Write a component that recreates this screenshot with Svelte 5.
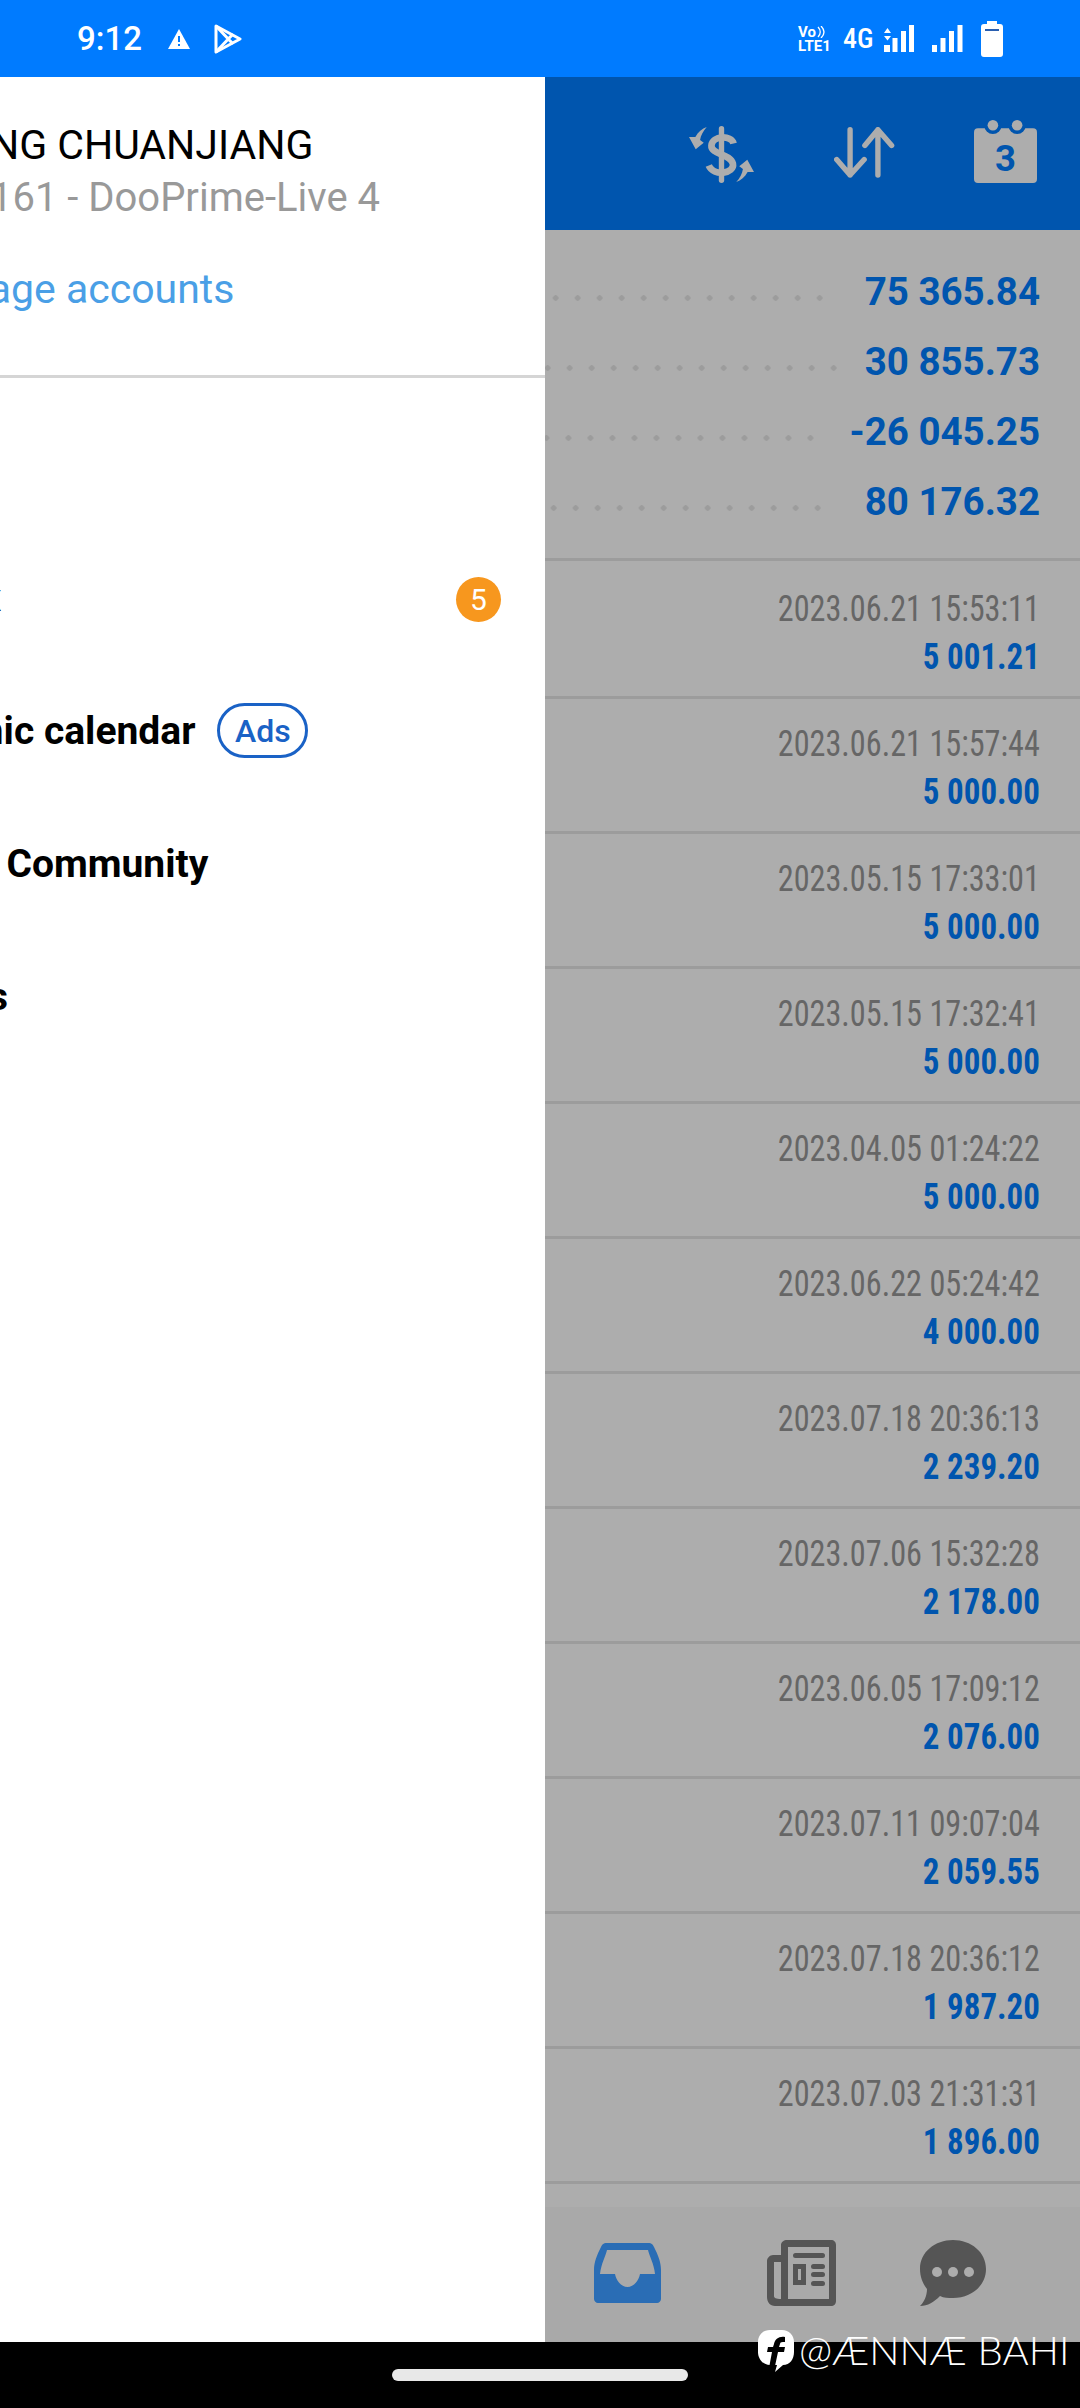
<script>
  const summary = [
    { value: "75 365.84", gap: 34 },
    { value: "30 855.73", gap: 20 },
    { value: "-26 045.25", gap: 28 },
    { value: "80 176.32", gap: 36 }
  ];
  const deals = [
    ["2023.06.21 15:53:11", "5 001.21"],
    ["2023.06.21 15:57:44", "5 000.00"],
    ["2023.05.15 17:33:01", "5 000.00"],
    ["2023.05.15 17:32:41", "5 000.00"],
    ["2023.04.05 01:24:22", "5 000.00"],
    ["2023.06.22 05:24:42", "4 000.00"],
    ["2023.07.18 20:36:13", "2 239.20"],
    ["2023.07.06 15:32:28", "2 178.00"],
    ["2023.06.05 17:09:12", "2 076.00"],
    ["2023.07.11 09:07:04", "2 059.55"],
    ["2023.07.18 20:36:12", "1 987.20"],
    ["2023.07.03 21:31:31", "1 896.00"]
  ];
</script>

<div class="screen">
  <header class="status">
    <div class="status-left">
      <span class="time">9:12</span>
      <svg class="warn" viewBox="0 0 22 20"><path d="M11 0 22 20H0Z" fill="#fff" /><path d="M10 7h2v6h-2zM10 15h2v2h-2z" fill="#007bff" /></svg>
      <svg class="play" viewBox="0 0 28 32" fill="none" stroke="#fff" stroke-width="3" stroke-linejoin="round"><path d="M2 3 26 16 2 29Z" /><path d="M2 3 19 21M2 29 19 11" /></svg>
    </div>
    <div class="status-right">
      <div class="volte"><span>Vo<svg viewBox="0 0 8 12" fill="none" stroke="#fff" stroke-width="1.3"><path d="M1 1c3 3 3 7 0 10M4 0c4 4 4 8 0 12" /></svg></span><span>LTE1</span></div>
      <span class="net">4G</span>
      <svg class="signal one" viewBox="0 0 32 28" fill="#fff">
        <path d="M1 8 4.500 3 8 8zM1 11h7l-3.500 4.500z" />
        <rect x="1" y="20" width="6" height="7" /><rect x="9.500" y="13" width="5" height="14" /><rect x="18" y="6" width="5" height="21" /><rect x="26" y="0" width="5" height="27" />
      </svg>
      <svg class="signal two" viewBox="0 0 31 28" fill="#fff">
        <rect x="0" y="20" width="5" height="7" /><rect x="8.500" y="13" width="5" height="14" /><rect x="17" y="6" width="5" height="21" /><rect x="25.500" y="0" width="5" height="27" />
      </svg>
      <svg class="battery" viewBox="0 0 22 36"><path d="M6 0h10v3h3a3 3 0 0 1 3 3v27a3 3 0 0 1-3 3H3a3 3 0 0 1-3-3V6a3 3 0 0 1 3-3h3z" fill="#fff" /><rect x="4" y="8" width="14" height="2" fill="#2a5fb0" /></svg>
    </div>
  </header>

  <div class="body">
    <aside class="drawer">
      <div class="account">
        <div class="name">ZHANG CHUANJIANG</div>
        <div class="server">1234161 - DooPrime-Live 4</div>
        <div class="manage">Manage accounts</div>
      </div>
      <nav class="menu">
        <div class="item"><span class="label">Mailbox</span><span class="badge">5</span></div>
        <div class="item"><span class="label">Economic calendar</span><span class="ads">Ads</span></div>
        <div class="item"><span class="label">Traders Community</span></div>
        <div class="item"><span class="label">Settings</span></div>
      </nav>
    </aside>

    <main class="panel">
      <div class="appbar">
        <svg class="ic-dollar" viewBox="0 0 200 170">
          <path d="M100 8V162" fill="none" stroke="#adadad" stroke-width="16" stroke-linecap="round" />
          <path d="M136 52C130 26 72 28 70 58 68 86 126 82 134 112 140 142 76 152 62 118" fill="none" stroke="#adadad" stroke-width="20" />
          <path d="M56 3C42 8 30 18 22 33L3 33 23 69 47 50 36 42C38 28 46 14 56 3Z" fill="#adadad" />
          <path d="M56 3C42 8 30 18 22 33L3 33 23 69 47 50 36 42C38 28 46 14 56 3Z" fill="#adadad" transform="rotate(180 100 85)" />
        </svg>
        <svg class="ic-arrows" viewBox="0 0 182 152" fill="none" stroke="#adadad" stroke-width="16" stroke-linecap="round" stroke-linejoin="round">
          <path d="M48 8V143M8 97 48 143 90 97" />
          <path d="M131 143V8M92 55 131 8 172 55" />
        </svg>
        <svg class="ic-calendar" viewBox="0 0 190 190">
          <rect x="0" y="25" width="190" height="165" rx="12" fill="#adadad" />
          <circle cx="57" cy="16" r="26" fill="#0055ae" />
          <circle cx="130" cy="16" r="26" fill="#0055ae" />
          <circle cx="57" cy="16" r="16" fill="#adadad" />
          <circle cx="130" cy="16" r="16" fill="#adadad" />
          <text x="95" y="155" text-anchor="middle">3</text>
        </svg>
      </div>

      <section class="summary">
        {#each summary as row}
          <div class="sum-row">
            <span class="dots" style="margin-right: {row.gap}px"></span>
            <span class="sum-value">{row.value}</span>
          </div>
        {/each}
      </section>

      <section class="deals">
        {#each deals as deal}
          <div class="deal">
            <div class="date"><span>{deal[0]}</span></div>
            <div class="amount"><span>{deal[1]}</span></div>
          </div>
        {/each}
      </section>

      <div class="tabs">
        <svg class="tab inbox" viewBox="0 0 67 60">
          <path fill-rule="evenodd" d="M13 0H54C58 0 59 2 60 4 64 12 67 19 67 27V56C67 58 65 60 63 60H4C2 60 0 58 0 56V27C0 19 3 12 7 4 8 2 9 0 13 0ZM13 7C12 12 7 21 6 31H21C22 37 27 44 33.500 44 40 44 45 37 46 31H61C60 21 55 12 54 7Z" fill="#2a6db5" />
        </svg>
        <svg class="tab news" viewBox="0 0 69 66" fill="#555">
          <path fill-rule="evenodd" d="M20 0H64C67 0 69 2 69 5V61C69 64 67 66 64 66H8C3 66 0 62 0 57V21C0 18 3 15 6 15H14V5C14 2 17 0 20 0ZM21 7V59H62V7ZM14 22H7V56C7 58 9 59 14 59Z" />
          <rect x="26" y="13" width="32" height="5" rx="2.500" />
          <path fill-rule="evenodd" d="M26 24H39V45H26ZM31 29V40H34V29Z" />
          <rect x="44" y="24" width="14" height="5" rx="2.500" /><rect x="44" y="32" width="14" height="5" rx="2.500" /><rect x="44" y="41" width="14" height="5" rx="2.500" />
        </svg>
        <svg class="tab chat" viewBox="0 0 66 66">
          <path d="M33 0C51 0 66 12 66 29 66 46 51 58 33 58 28 58 24 58 20 56 14 62 8 66 0 66 4 62 7 56 7 49 3 44 0 37 0 29 0 12 15 0 33 0Z" fill="#555" />
          <circle cx="17" cy="32" r="5" fill="#adadad" /><circle cx="33" cy="32" r="5" fill="#adadad" /><circle cx="49" cy="32" r="5" fill="#adadad" />
        </svg>
      </div>
    </main>
  </div>

  <footer class="navbar"><span class="pill"></span></footer>

  <div class="watermark">
    <svg class="fb" viewBox="0 0 36 42">
      <path d="M12 0H24C31 0 36 5 36 12V22C36 29 32 35 25 35L17 42 19 35H12C5 35 0 29 0 22V12C0 5 5 0 12 0Z" fill="#fff" />
      <path d="M27 7C21 6 17 9 16 14L15 17H10L9 22H14L11 38 17 36 20 22H26L27 17H21L22 14C22 12 24 12 27 12Z" fill="#000" />
    </svg>
    <span>@ÆNNÆ BAHI</span>
  </div>
</div>

<style>
  :global(body) {
    margin: 0;
    background: #000;
  }
  .screen {
    position: relative;
    width: 1080px;
    height: 2408px;
    overflow: hidden;
    display: flex;
    flex-direction: column;
    font-family: Roboto, "Liberation Sans", sans-serif;
  }

  .status {
    height: 77px;
    flex: none;
    background: #007bff;
    color: #fff;
    display: flex;
    justify-content: space-between;
    align-items: center;
  }
  .status-left {
    display: flex;
    align-items: center;
    padding-left: 77px;
  }
  .time {
    font-size: 33px;
    font-weight: 500;
    width: 91px;
  }
  .warn {
    width: 22px;
    height: 20px;
  }
  .play {
    width: 28px;
    height: 32px;
    margin-left: 24px;
  }
  .status-right {
    display: flex;
    align-items: center;
    padding-right: 77px;
  }
  .volte {
    width: 34px;
    display: flex;
    flex-direction: column;
    font-size: 15px;
    font-weight: 700;
    line-height: 14px;
    margin-right: 11px;
  }
  .volte span {
    display: flex;
    align-items: center;
    white-space: nowrap;
  }
  .volte svg {
    width: 8px;
    height: 12px;
    margin-left: 1px;
  }
  .net {
    font-size: 28px;
    font-weight: 500;
    font-stretch: 75%;
    width: 39px;
  }
  .signal {
    height: 28px;
  }
  .signal.one {
    width: 32px;
    margin-left: 1px;
  }
  .signal.two {
    width: 31px;
    margin-left: 17px;
  }
  .battery {
    width: 22px;
    height: 36px;
    margin-left: 18px;
  }

  .body {
    flex: 1;
    display: flex;
    min-height: 0;
  }

  .drawer {
    width: 545px;
    flex: none;
    background: #fff;
    overflow: hidden;
  }
  .account {
    height: 301px;
    box-sizing: border-box;
    padding-top: 44px;
    border-bottom: 3px solid #d5d5d5;
    margin-left: -100px;
    margin-right: -10px;
    white-space: nowrap;
  }
  .name {
    font-size: 41px;
    line-height: 48px;
    margin-left: 9px;
    color: #000;
  }
  .server {
    font-size: 40px;
    line-height: 48px;
    margin-top: 5px;
    color: #999;
  }
  .manage {
    font-size: 41px;
    line-height: 48px;
    margin-top: 43px;
    margin-left: 8px;
    color: #4a9fe6;
  }
  .menu {
    margin-left: -138px;
    padding-top: 153px;
  }
  .item {
    height: 133px;
    display: flex;
    align-items: center;
    position: relative;
  }
  .label {
    font-size: 39px;
    font-weight: 700;
    color: #000;
    white-space: nowrap;
  }
  .badge {
    position: absolute;
    left: 594px;
    top: 46px;
    width: 45px;
    height: 45px;
    border-radius: 50%;
    background: #f7971e;
    color: #fff;
    font-size: 30px;
    display: flex;
    align-items: center;
    justify-content: center;
  }
  .ads {
    margin-left: 22px;
    width: 91px;
    height: 55px;
    box-sizing: border-box;
    border: 3px solid #1a62c6;
    border-radius: 28px;
    color: #1a62c6;
    font-size: 32px;
    font-weight: 500;
    display: flex;
    align-items: center;
    justify-content: center;
  }

  .panel {
    flex: 1;
    background: #adadad;
    display: flex;
    flex-direction: column;
    min-width: 0;
  }
  .appbar {
    height: 153px;
    flex: none;
    box-sizing: border-box;
    background: #0055ae;
    display: flex;
    position: relative;
  }
  .appbar svg {
    position: absolute;
  }
  .ic-dollar {
    left: 143px;
    top: 49px;
    width: 67px;
    height: 57px;
  }
  .ic-arrows {
    left: 289px;
    top: 50px;
    width: 61px;
    height: 51px;
  }
  .ic-calendar {
    left: 429px;
    top: 43px;
    width: 63px;
    height: 63px;
  }
  .ic-calendar text {
    font-family: Roboto, sans-serif;
    font-size: 110px;
    font-weight: 700;
    fill: #0055ae;
  }

  .summary {
    height: 331px;
    flex: none;
    box-sizing: border-box;
    padding: 26px 40px 0 0;
    border-bottom: 3px solid #9c9c9c;
  }
  .sum-row {
    height: 70px;
    display: flex;
    align-items: center;
    justify-content: flex-end;
  }
  .dots {
    flex: 1;
    height: 6px;
    margin-top: 13px;
    background: radial-gradient(circle, #9c9c9c 2.5px, transparent 3px) right center / 22px 6px repeat-x;
  }
  .sum-value {
    font-size: 38.5px;
    font-weight: 700;
    color: #0055ae;
    white-space: nowrap;
  }

  .deals {
    flex: 1;
    min-height: 0;
    overflow: hidden;
  }
  .deal {
    height: 135px;
    box-sizing: border-box;
    padding: 21px 40px 0 0;
    border-bottom: 3px solid #9c9c9c;
    text-align: right;
  }
  .deal:first-child {
    height: 138px;
    padding-top: 24px;
  }
  .date,
  .amount {
    height: 48px;
    line-height: 48px;
    font-size: 36px;
    font-stretch: 75%;
    white-space: nowrap;
  }
  .date span,
  .amount span {
    display: inline-block;
    transform-origin: right center;
  }
  .date {
    color: #666;
  }
  .date span {
    transform: scaleX(0.895);
  }
  .amount {
    font-weight: 700;
    color: #0055ae;
  }
  .amount span {
    transform: scaleX(0.915);
  }

  .tabs {
    height: 135px;
    flex: none;
    background: #a9a9a9;
    position: relative;
  }
  .tab {
    position: absolute;
  }
  .inbox {
    left: 49px;
    top: 36px;
    width: 67px;
    height: 60px;
  }
  .news {
    left: 222px;
    top: 33px;
    width: 69px;
    height: 66px;
  }
  .chat {
    left: 375px;
    top: 33px;
    width: 66px;
    height: 66px;
  }

  .navbar {
    height: 66px;
    flex: none;
    background: #000;
    display: flex;
    justify-content: center;
    padding-top: 27px;
    box-sizing: border-box;
  }
  .pill {
    width: 296px;
    height: 12px;
    border-radius: 6px;
    background: #e8e8e8;
  }

  .watermark {
    position: absolute;
    left: 758px;
    top: 2330px;
    display: flex;
    align-items: flex-start;
    color: #fff;
    font-family: Lato, "Open Sans", sans-serif;
    font-weight: 300;
    font-size: 40px;
    line-height: 40px;
    white-space: nowrap;
  }
  .fb {
    width: 36px;
    height: 42px;
    margin-right: 5px;
  }
</style>
